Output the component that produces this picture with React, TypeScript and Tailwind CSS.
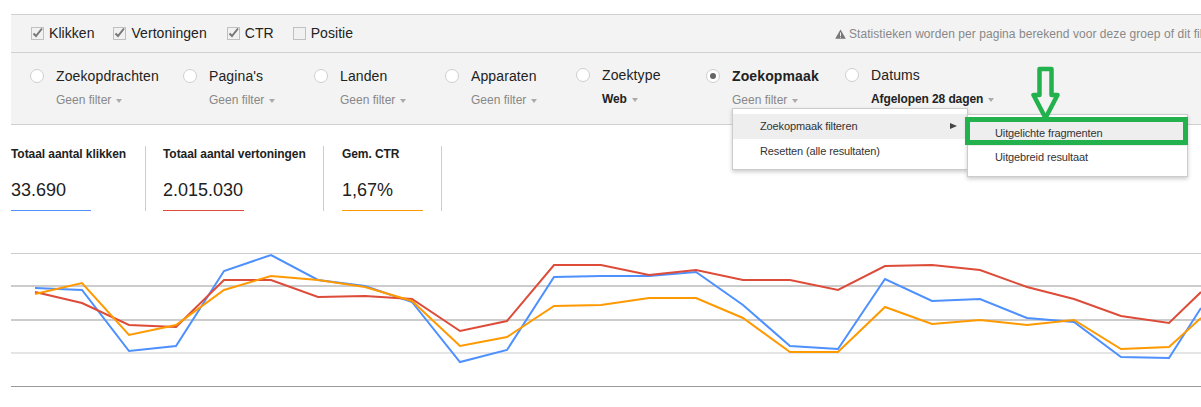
const sans = "font-['Liberation_Sans',Arial,sans-serif]";

const checks = [
  { label: 'Klikken', checked: true, gap: 'mr-[19px]' },
  { label: 'Vertoningen', checked: true, gap: 'mr-[20px]' },
  { label: 'CTR', checked: true, gap: 'mr-[19px]' },
  { label: 'Positie', checked: false, gap: 'mr-0' },
];

const tabs = [
  { label: 'Zoekopdrachten', sub: 'Geen filter', width: 'w-[153px]' },
  { label: "Pagina's", sub: 'Geen filter', width: 'w-[131px]' },
  { label: 'Landen', sub: 'Geen filter', width: 'w-[131px]' },
  { label: 'Apparaten', sub: 'Geen filter', width: 'w-[131px]' },
  { label: 'Zoektype', sub: 'Web', width: 'w-[130px]', strong: true, up: true },
  { label: 'Zoekopmaak', sub: 'Geen filter', width: 'w-[139px]', active: true },
  { label: 'Datums', sub: 'Afgelopen 28 dagen', width: 'w-[200px]', strong: true, up: true },
];

const stats = [
  { label: 'Totaal aantal klikken', value: '33.690', color: 'border-[#4d90fe]', width: 'w-[135px]', pad: 'pl-0', line: 'w-[80px]' },
  { label: 'Totaal aantal vertoningen', value: '2.015.030', color: 'border-[#dd4b39]', width: 'w-[178px]', pad: 'pl-[17px]', line: 'w-[81px]' },
  { label: 'Gem. CTR', value: '1,67%', color: 'border-[#ff9900]', width: 'w-[118px]', pad: 'pl-[18px]', line: 'w-[81px]' },
];

const xs = [35, 82, 129, 176, 224, 271, 318, 365, 412, 460, 507, 554, 601, 649, 696, 743, 790, 838, 885, 932, 980, 1027, 1074, 1121, 1169, 1201];
const series = [
  { color: '#4d90fe', ys: [288, 290, 351, 346, 271, 255, 280, 286, 302, 362, 350, 277, 276, 276, 272, 305, 346, 349, 279, 301, 299, 318, 322, 357, 358, 308] },
  { color: '#dd4b39', ys: [292, 303, 325, 327, 280, 280, 297, 296, 299, 331, 321, 265, 265, 275, 270, 280, 280, 290, 266, 265, 270, 287, 299, 316, 323, 292] },
  { color: '#ff9900', ys: [294, 283, 335, 325, 290, 276, 280, 287, 301, 346, 337, 306, 305, 298, 298, 318, 352, 352, 307, 324, 320, 325, 320, 349, 347, 318] },
];

function Caret() {
  return <span className="ml-[5px] inline-block h-0 w-0 border-x-[3.5px] border-t-[4px] border-x-transparent border-t-[#aaa] align-middle" />;
}

function CheckBox({ checked }: { checked: boolean }) {
  return (
    <span className="flex h-[13px] w-[13px] items-center justify-center border border-[#c0c0c0] bg-[#f1f1f1]">
      {checked && (
        <svg width="11" height="11" viewBox="0 0 11 11" fill="none" className="overflow-visible">
          <path d="M1.5 5.5 L4 8 L10 0.5" stroke="#777" strokeWidth="2" />
        </svg>
      )}
    </span>
  );
}

function Radio({ active }: { active?: boolean }) {
  return (
    <span className="flex h-[14px] w-[14px] shrink-0 items-center justify-center rounded-full border border-[#cfcfcf] bg-white">
      {active && <span className="h-[6px] w-[6px] rounded-full bg-[#666]" />}
    </span>
  );
}

function Toolbar() {
  return (
    <div className="ml-[11px] mt-[14px] border-y border-[#d0d0d0] bg-[#f3f3f3]">
      <div className="flex h-[38px] items-center justify-between border-b border-[#d0d0d0] pl-[20px]">
        <div className="flex items-center">
          {checks.map(c => (
            <label key={c.label} className={`flex items-center text-[14px] tracking-[0.05px] text-[#222] ${c.gap}`}>
              <CheckBox checked={c.checked} />
              <span className="ml-[5px]">{c.label}</span>
            </label>
          ))}
        </div>
        <div className="flex w-[366px] shrink-0 items-center overflow-hidden whitespace-nowrap text-[12px] tracking-[0.06px] text-[#888]">
          <svg width="11" height="10" viewBox="0 0 11 10" className="mr-[3px] shrink-0">
            <path d="M5.5 0.5 L10.8 9.8 L0.2 9.8 Z" fill="#777" />
            <rect x="5" y="3.5" width="1" height="3.5" fill="#f3f3f3" />
            <rect x="5" y="7.8" width="1" height="1" fill="#f3f3f3" />
          </svg>
          Statistieken worden per pagina berekend voor deze groep of dit filter
        </div>
      </div>
      <div className="flex h-[71px] pl-[19px] pt-[14px]">
        {tabs.map(t => (
          <div key={t.label} className={`flex ${t.width} ${t.up ? '-mt-px' : ''}`}>
            <div className="pt-[2px]"><Radio active={t.active} /></div>
            <div className="ml-[12px]">
              <div className={`h-[18px] text-[14px] leading-[18px] tracking-[0.12px] text-[#222] ${t.active ? 'font-bold' : ''}`}>{t.label}</div>
              <div className={`mt-[7px] whitespace-nowrap text-[12px] leading-[16px] ${t.strong ? 'font-bold tracking-[-0.1px] text-[#222]' : 'text-[#888]'}`}>
                {t.sub}
                <Caret />
              </div>
            </div>
          </div>
        ))}
      </div>
    </div>
  );
}

function Menus() {
  return (
    <>
      {/* first level dropdown */}
      <div className="absolute left-[732px] top-[108px] h-[62px] w-[236px] border border-[#ccc] bg-white py-[5px] text-[11px] tracking-[-0.12px] text-[#333] shadow-[0_2px_4px_rgba(0,0,0,0.2)]">
        <div className="relative flex h-[25px] items-center bg-[#eeeeee] pl-[27px]">
          Zoekopmaak filteren
          <span className="absolute right-[10px] top-[9px] h-0 w-0 border-y-[3.5px] border-l-[7px] border-y-transparent border-l-[#444]" />
        </div>
        <div className="flex h-[25px] items-center pl-[27px]">Resetten (alle resultaten)</div>
      </div>
      {/* submenu */}
      <div className="absolute left-[967px] top-[114px] h-[63px] w-[221px] border border-[#ccc] bg-white py-[6px] text-[11px] tracking-[-0.12px] text-[#333] shadow-[0_2px_4px_rgba(0,0,0,0.2)]">
        <div className="flex h-[25px] items-center bg-[#eeeeee] pl-[27px]">Uitgelichte fragmenten</div>
        <div className="flex h-[23px] items-center pl-[27px]">Uitgebreid resultaat</div>
      </div>
      {/* green annotation */}
      <div className="absolute left-[965px] top-[117px] h-[28px] w-[223px] border-[5px] border-[#22b14c]" />
      <svg className="absolute left-[1030px] top-[66px]" width="32" height="54" viewBox="0 0 32 54" fill="none">
        <path d="M9.5 3 H21.5 V29 H27.5 L15.5 52 L3.5 29 H9.5 Z" stroke="#22b14c" strokeWidth="4.5" strokeLinejoin="round" />
      </svg>
    </>
  );
}

function Stats() {
  return (
    <div className="ml-[11px] mt-[21px] flex h-[65px]">
      {stats.map(s => (
        <div key={s.label} className={`${s.width} ${s.pad} border-r border-[#ccc]`}>
          <div className="whitespace-nowrap pt-[1px] text-[12px] font-bold leading-[14px] tracking-[-0.07px] text-[#222]">{s.label}</div>
          <div className="mt-[18px] text-[18px] leading-[22px] text-[#222]">{s.value}</div>
          <div className={`mt-[9px] border-t-[1.5px] ${s.line} ${s.color}`} />
        </div>
      ))}
    </div>
  );
}

function Chart() {
  return (
    <svg className="mt-[29px] block" width="1201" height="150" viewBox="0 240 1201 150" fill="none">
      {[253.5, 286, 320, 353].map(y => (
        <line key={y} x1="11" x2="1201" y1={y} y2={y} stroke="#cccccc" strokeWidth={y === 286 || y === 320 ? 1.8 : 1.2} />
      ))}
      <line x1="11" x2="1201" y1="386.5" y2="386.5" stroke="#999" />
      {series.map(s => (
        <polyline key={s.color} points={s.ys.map((y, i) => `${xs[i]},${y}`).join(' ')} stroke={s.color} strokeWidth="2" />
      ))}
    </svg>
  );
}

export default function App() {
  return (
    <div className={`relative h-[407px] w-[1201px] overflow-hidden bg-white ${sans}`}>
      <Toolbar />
      <Stats />
      <Chart />
      <Menus />
    </div>
  );
}
